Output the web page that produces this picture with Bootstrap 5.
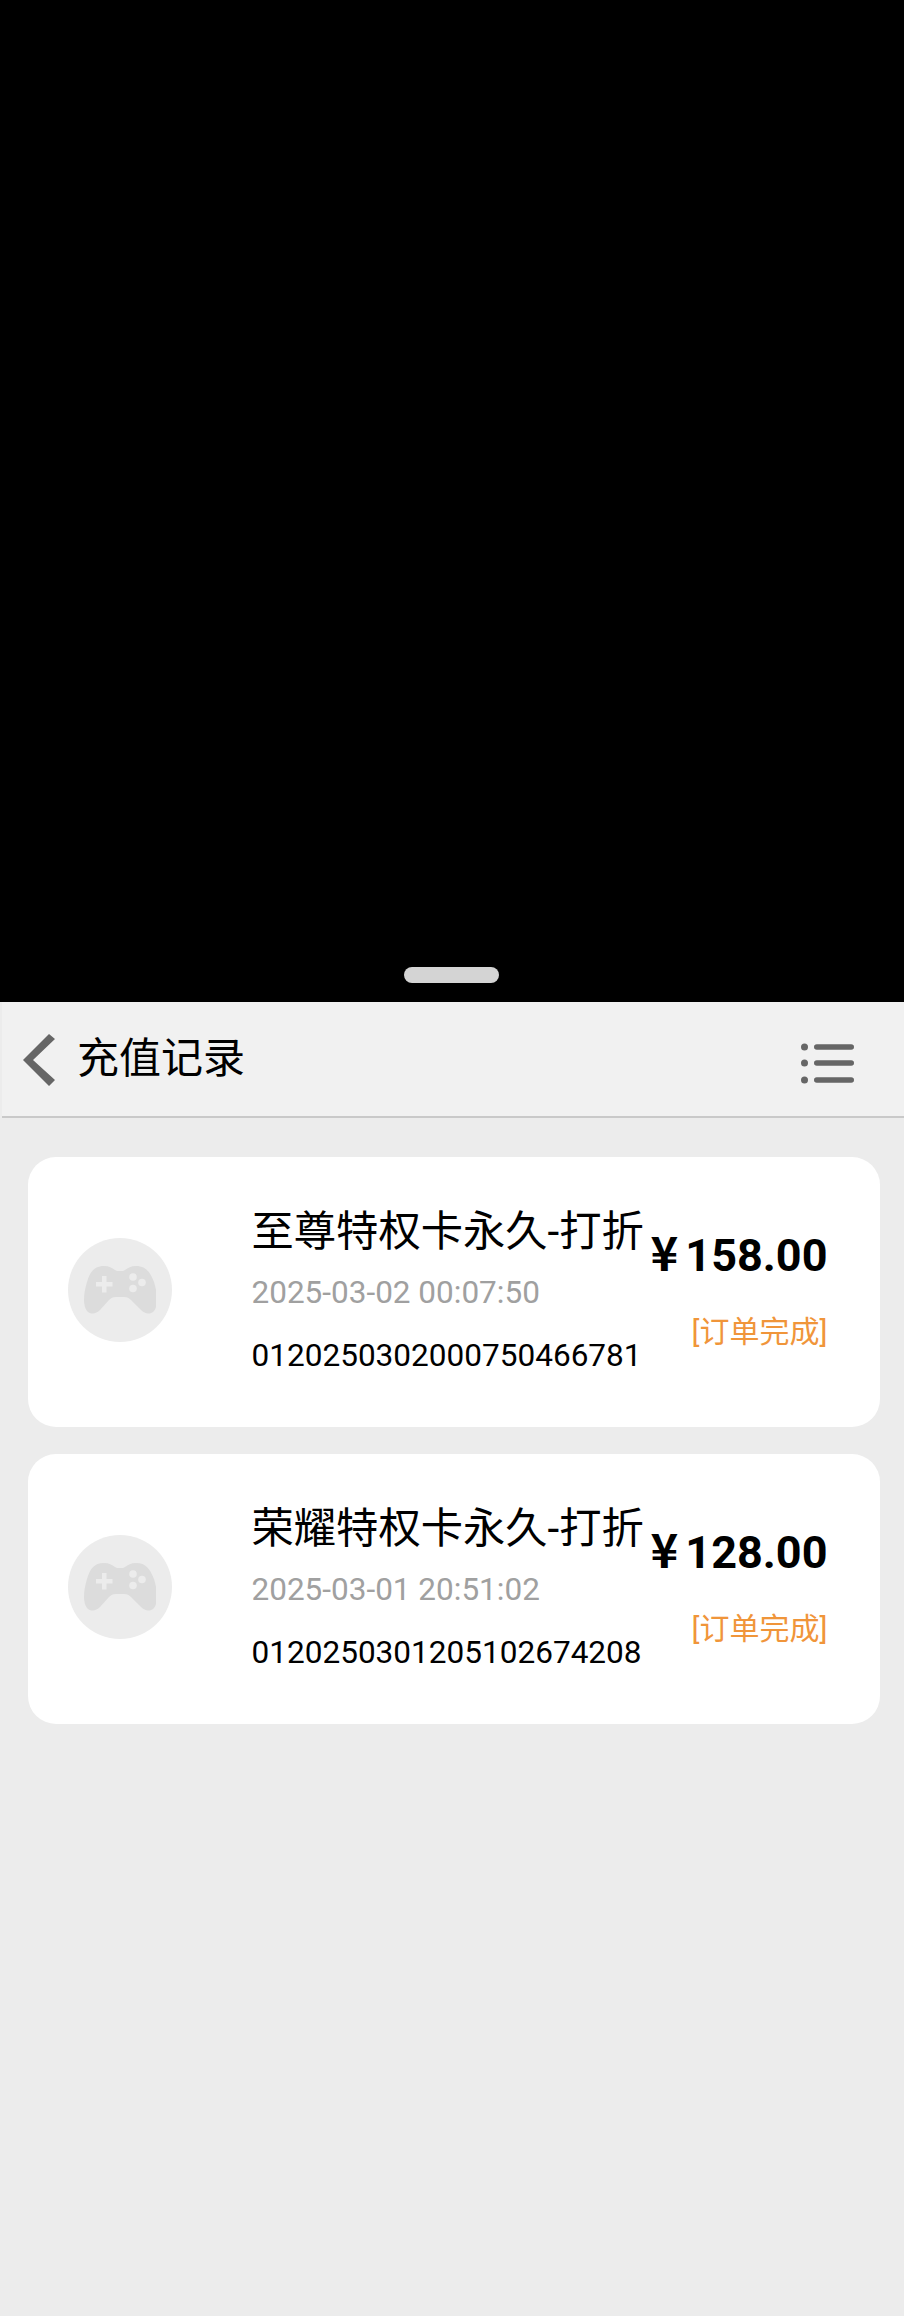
<!DOCTYPE html>
<html lang="zh-CN">
<head>
    <meta charset="UTF-8" />
    <meta name="viewport" content="width=device-width, initial-scale=1.0" />
    <title>充值记录</title>
    <link href="https://cdn.jsdelivr.net/npm/bootstrap@5.3.3/dist/css/bootstrap.min.css" rel="stylesheet" />
    <style>
        body {
            font-family: Roboto, "Noto Sans CJK SC", sans-serif;
            background-color: #ececec;
            color: #000;
            min-height: 2316px;
        }

        .video-area {
            height: 1002px;
            background-color: #000;
            padding-bottom: 19px;
        }

        .drag-handle {
            width: 95px;
            height: 16px;
            background-color: #d4d4d4;
            border-radius: 8px;
            margin-right: 2px;
        }

        .top-bar {
            height: 116px;
            margin-left: 2px;
            padding: 0 49px 0 21px;
            background-color: #f1f1f1;
            border-bottom: 2px solid #c9c9c9;
        }

        .top-title {
            font-size: 42px;
            line-height: 1;
            margin-left: 22px;
        }

        .back-icon {
            margin-top: 2px;
        }

        .menu-icon {
            margin-top: 10px;
        }

        .order-list {
            padding: 39px 24px 0 28px;
            gap: 27px;
        }

        .order-item {
            height: 270px;
            background-color: #fff;
            border-radius: 28px;
        }

        .game-thumb {
            width: 104px;
            height: 104px;
            margin-left: 40px;
            margin-bottom: 4px;
            background-color: #ececec;
            border-radius: 50%;
            flex: none;
        }

        .order-info {
            width: 391px;
            margin-left: 79.5px;
            margin-bottom: 6px;
            flex: none;
        }

        .order-name {
            font-size: 42.3px;
            line-height: 60px;
            white-space: nowrap;
        }

        .order-time {
            font-size: 31.5px;
            line-height: 40px;
            margin-top: 11.5px;
            color: #a0a0a0;
            white-space: nowrap;
        }

        .order-no {
            font-size: 31.55px;
            line-height: 40px;
            margin-top: 23px;
            white-space: nowrap;
        }

        .order-right {
            width: 185px;
            margin-bottom: 8.5px;
            flex: none;
        }

        .order-price {
            font-size: 45px;
            line-height: 54px;
            font-weight: 700;
            white-space: nowrap;
        }

        .yuan-sign {
            font-family: "Noto Sans CJK SC", sans-serif;
            font-size: 47px;
            margin-right: 7px;
        }

        .order-state {
            font-size: 30px;
            line-height: 40px;
            margin-top: 29.5px;
            color: #f0953a;
            white-space: nowrap;
        }
    </style>
</head>
<body>

<div class="video-area d-flex justify-content-center align-items-end">
    <div class="drag-handle"></div>
</div>

<header class="top-bar d-flex align-items-center">
    <svg class="back-icon" width="32" height="52" viewBox="0 0 32 52" aria-hidden="true">
        <polygon fill="#666" points="26,0 32,5 10,26 32,46 26,52 0,26" />
    </svg>
    <div class="top-title">充值记录</div>
    <svg class="menu-icon ms-auto" width="54" height="44" viewBox="0 0 54 44" aria-hidden="true">
        <g fill="#666">
            <circle cx="3.5" cy="5" r="3.5" />
            <circle cx="3.5" cy="21" r="3.5" />
            <circle cx="3.5" cy="38" r="3.5" />
            <rect x="13" y="2.2" width="40" height="5.6" rx="2.8" />
            <rect x="13" y="18.2" width="40" height="5.6" rx="2.8" />
            <rect x="13" y="35.2" width="40" height="5.6" rx="2.8" />
        </g>
    </svg>
</header>

<main class="order-list d-flex flex-column" id="orders"></main>

<script>
    const orders = [
        { name: "至尊特权卡永久-打折", time: "2025-03-02 00:07:50", no: "0120250302000750466781", price: "158.00" },
        { name: "荣耀特权卡永久-打折", time: "2025-03-01 20:51:02", no: "0120250301205102674208", price: "128.00" }
    ];

    const pad = `<svg width="72" height="50" viewBox="0 0 72 50" aria-hidden="true">
        <path fill="#dcdcdc" d="M20 1C10 1 6 7 3 17-1 30-1 41 3 46c4 4 9 3 13-1l9-10c2-2 4-3 7-3h8c3 0 5 1 7 3l10 10c4 4 9 5 13 1 4-5 4-16 0-29C66 7 62 1 52 1c-5 0-8 2-11 4-1 1-3 1-5 1s-4 0-5-1c-3-2-6-4-11-4z" />
        <path fill="#ececec" d="M18 11h4.500v6h6v4.500h-6v6H18v-6h-6V17h6z" />
        <circle fill="#ececec" cx="49" cy="12" r="3.8" />
        <circle fill="#ececec" cx="58" cy="17.5" r="3.8" />
        <circle fill="#ececec" cx="49" cy="23.5" r="3.8" />
    </svg>`;

    document.getElementById("orders").innerHTML = orders.map(o => `
        <section class="order-item d-flex align-items-center">
            <div class="game-thumb d-flex justify-content-center align-items-center">${pad}</div>
            <div class="order-info">
                <div class="order-name">${o.name}</div>
                <div class="order-time">${o.time}</div>
                <div class="order-no">${o.no}</div>
            </div>
            <div class="order-right text-end">
                <div class="order-price"><span class="yuan-sign">¥</span>${o.price}</div>
                <div class="order-state">[订单完成]</div>
            </div>
        </section>`).join("");
</script>

<script src="https://cdn.jsdelivr.net/npm/bootstrap@5.3.3/dist/js/bootstrap.bundle.min.js"></script>
</body>
</html>
